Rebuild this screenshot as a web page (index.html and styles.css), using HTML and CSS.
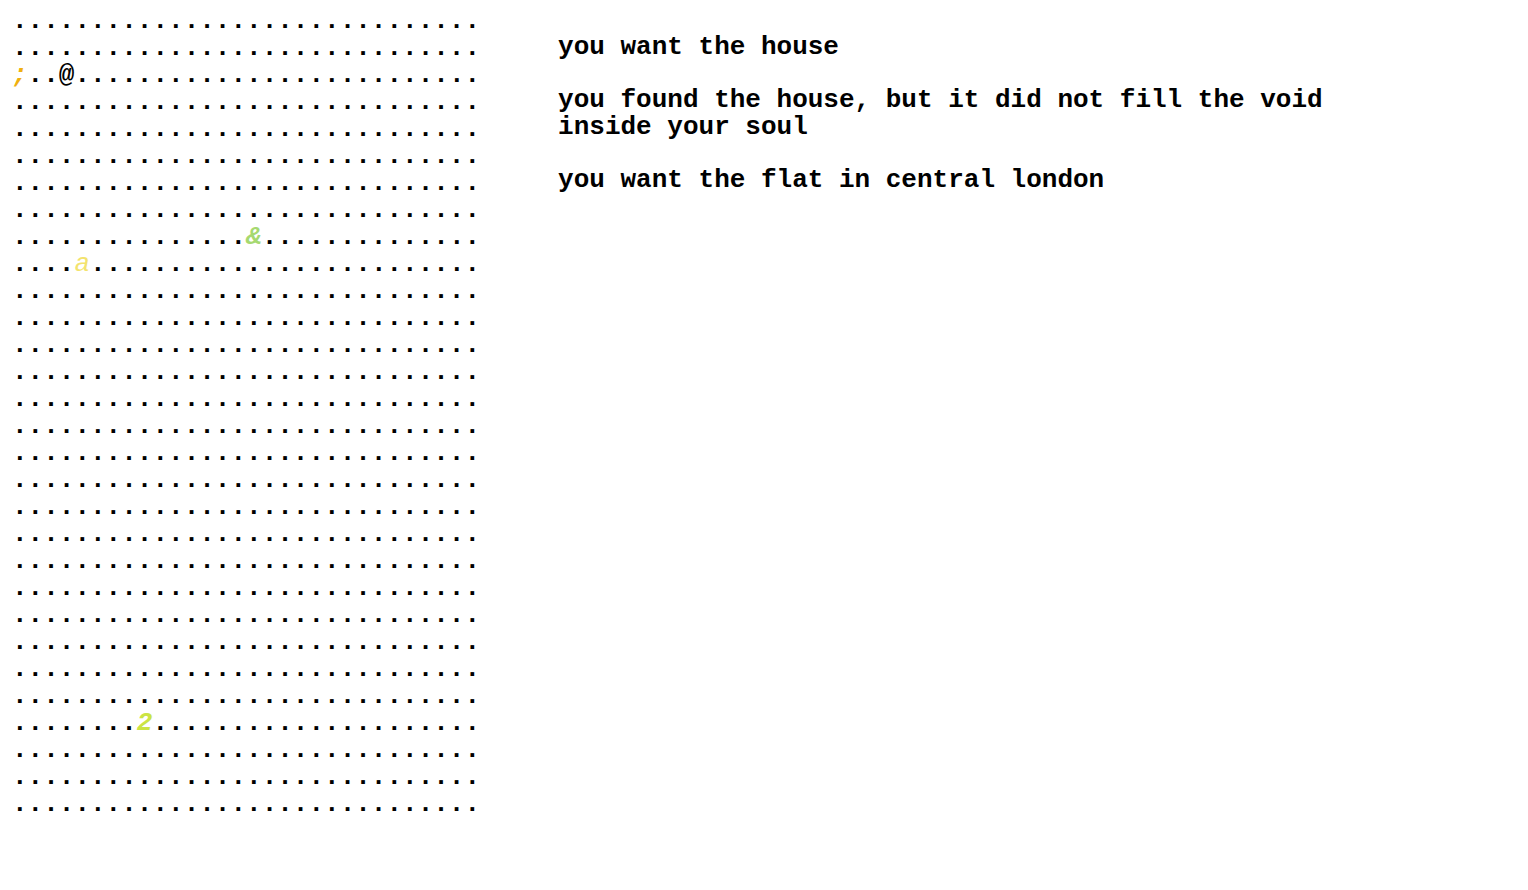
FILE: index.html
```html
<!DOCTYPE html>
<html>
<head>
<meta charset="utf-8">
<link rel="stylesheet" href="styles.css">
<title>void</title>
</head>
<body>
<div class="page">
<pre class="grid">..............................
..............................
<span class="c-semi">;</span>..@..........................
..............................
..............................
..............................
..............................
..............................
...............<span class="c-amp">&amp;</span>..............
....<span class="c-a">a</span>.........................
..............................
..............................
..............................
..............................
..............................
..............................
..............................
..............................
..............................
..............................
..............................
..............................
..............................
..............................
..............................
..............................
........<span class="c-two">2</span>.....................
..............................
..............................
..............................</pre>
<div class="log">
<p class="line">you want the house</p>
<p class="line">you found the house, but it did not fill the void inside your soul</p>
<p class="line">you want the flat in central london</p>
</div>
</div>
</body>
</html>
```
FILE: styles.css
```css
html, body {
  margin: 0;
  padding: 0;
  background: #ffffff;
}
.page {
  display: flex;
  align-items: flex-start;
  padding: 8px 12px;
  font-family: "Liberation Mono", "Courier New", monospace;
  font-weight: bold;
  font-size: 26px;
  line-height: 27px;
  color: #000000;
}
.grid {
  margin: 0;
  font: inherit;
  line-height: 27px;
}
.c-semi { color: #efb00f; font-style: italic; }
.c-amp { color: #a6d970; font-style: italic; }
.c-a { color: #f3e36e; font-weight: normal; font-style: italic; }
.c-two { color: #cbe443; font-style: italic; }
.log {
  margin-left: 78px;
  margin-top: 0;
  width: 800px;
}
.line {
  margin: 26px 0 0 0;
}
```
